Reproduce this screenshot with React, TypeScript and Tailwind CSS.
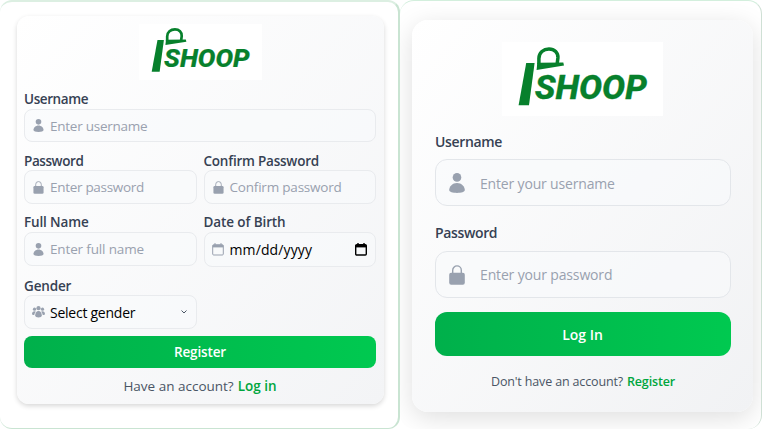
import type { ReactNode } from "react";

function Logo({ className }: { className: string }) {
  return (
    <svg viewBox="0 0 161 74" className={className} preserveAspectRatio="none" fill="#07802c">
      <rect width="161" height="74" fill="#fff" />
      <path d="M24.200 21h8.400L27 63.200H16.600z" />
      <path d="M35.300 20.800l26-.4.7 3-27.400 4.500z" />
      <path d="M36.900 22.500V16.500C36.900 10.500 41.500 7.100 47 7.100s9.300 3.600 8.900 8.900l-.7 5.500" fill="none" stroke="#07802c" strokeWidth="3.500" />
      <text x="32.800" y="56.700" fontSize="33" fontWeight="800" fontStyle="italic" fontFamily="Roboto, sans-serif" textLength="112" lengthAdjust="spacingAndGlyphs" stroke="#07802c" strokeWidth=".3">SHOOP</text>
    </svg>
  );
}

function Person({ className }: { className: string }) {
  return (
    <svg viewBox="0 0 16 20" className={className} fill="currentColor">
      <circle cx="8" cy="4.400" r="4.300" />
      <path d="M8 10C3.500 10 .2 13.500.2 17c0 2 3.500 2.900 7.800 2.900s7.800-.9 7.800-2.900C15.800 13.500 12.500 10 8 10z" />
    </svg>
  );
}

function Lock({ className }: { className: string }) {
  return (
    <svg viewBox="0 0 16 20" className={className} fill="currentColor">
      <rect x=".2" y="7.800" width="15.600" height="12" rx="2" />
      <path d="M3.700 8.500V5.200a4.300 4.300 0 0 1 8.600 0v3.300" fill="none" stroke="currentColor" strokeWidth="1.400" />
    </svg>
  );
}

function Calendar({ className, weight }: { className: string; weight: number }) {
  return (
    <svg viewBox="0 0 12 13" className={className} fill="none" stroke="currentColor" strokeWidth={weight}>
      <rect x=".7" y="1.700" width="10.600" height="10.300" rx="1" />
      <path d="M.7 3.200h10.600" strokeWidth="2.400" />
      <path d="M3 0v2M9 0v2" />
    </svg>
  );
}

function People({ className }: { className: string }) {
  return (
    <svg viewBox="0 0 13 12" className={className} fill="currentColor">
      <circle cx="6.500" cy="2.200" r="2.100" />
      <circle cx="2.500" cy="3.200" r="1.600" />
      <circle cx="10.500" cy="3.200" r="1.600" />
      <path d="M2.500 5.200C1 5.200 0 6.500 0 8c0 .8.900 1.100 2.300 1.100.2-1.500.6-2.500 1.600-3.400-.4-.3-.8-.5-1.400-.5zM10.500 5.200c1.500 0 2.500 1.300 2.500 2.800 0 .8-.9 1.100-2.300 1.100-.2-1.500-.6-2.500-1.600-3.400.4-.3.800-.5 1.400-.5z" />
      <path d="M6.500 5C4.500 5 3.200 7 3.200 9.300c0 1.600 1.500 2.200 3.300 2.200s3.300-.6 3.300-2.200C9.800 7 8.500 5 6.500 5z" />
    </svg>
  );
}

function Field({ label, labelClass, boxClass, icon, children }: { label: string; labelClass: string; boxClass: string; icon: ReactNode; children: ReactNode }) {
  return (
    <div className="min-w-0">
      <div className={`flex h-[18px] items-center text-[13.500px] leading-none font-semibold text-[#364153] ${labelClass}`}>{label}</div>
      <div className={`flex items-center rounded-lg border border-[#e9ebee] bg-[#f9fafb]/60 pl-[7px] text-[14px] ${boxClass}`}>
        <span className="flex w-[13px] shrink-0 justify-center text-[#99a1af]">{icon}</span>
        {children}
      </div>
    </div>
  );
}

export default function App() {
  return (
    <div className="flex h-[430px] w-[763px] overflow-hidden whitespace-nowrap bg-white font-['Open_Sans','Noto_Sans',sans-serif]">
      <section className="h-[429px] w-[400px] shrink-0 rounded-[12px] border-t-2 border-r-2 border-b border-t-[#dcefe2] border-r-[#c9e4d2] border-b-[#c9e4d2] pt-[14px] pl-[17px]">
        <div className="h-[388px] w-[367px] rounded-xl bg-linear-to-br from-white to-[#f3f4f6] pt-2 pr-2 pl-[7px] shadow-[0_2px_5px_rgba(0,0,0,0.16)]">
          <Logo className="mx-auto block h-[56px] w-[123px]" />
          <div className="pt-[10px]">
            <Field label="Username" labelClass="pt-[2px] tracking-[-0.4px]" boxClass="mt-px h-[33px]" icon={<Person className="h-[13px] w-[11px]" />}>
              <span className="mt-px ml-[5px] text-[13.500px] tracking-[-0.25px] text-[#99a1af]">Enter username</span>
            </Field>
          </div>
          <div className="grid grid-cols-2 gap-x-[7px] pt-[10px]">
            <Field label="Password" labelClass="pt-px tracking-[-0.42px]" boxClass="h-[34px]" icon={<Lock className="h-[13px] w-[11px]" />}>
              <span className="mt-px ml-[5px] text-[13.500px] tracking-[-0.3px] text-[#99a1af]">Enter password</span>
            </Field>
            <Field label="Confirm Password" labelClass="pt-px tracking-[-0.22px]" boxClass="h-[34px]" icon={<Lock className="h-[13px] w-[11px]" />}>
              <span className="mt-px ml-[5px] text-[13.500px] tracking-[-0.2px] text-[#99a1af]">Confirm password</span>
            </Field>
          </div>
          <div className="grid grid-cols-2 gap-x-[7px] pt-[10px]">
            <Field label="Full Name" labelClass="tracking-[-0.15px]" boxClass="h-[34px]" icon={<Person className="h-[13px] w-[11px]" />}>
              <span className="ml-[5px] text-[13.500px] tracking-[-0.15px] text-[#99a1af]">Enter full name</span>
            </Field>
            <Field label="Date of Birth" labelClass="tracking-[-0.1px]" boxClass="h-[35px]" icon={<Calendar weight={1} className="h-[13px] w-[12px]" />}>
              <span className="ml-[5px] tracking-[0.12px] text-black">mm/dd/yyyy</span>
              <Calendar weight={1.4} className="mr-[8px] ml-auto h-[13px] w-[12px] text-black" />
            </Field>
          </div>
          <div className="w-[173px] pt-[10px]">
            <Field label="Gender" labelClass="pt-[2px] tracking-[-0.15px]" boxClass="h-[34px]" icon={<People className="h-[12px] w-[13px]" />}>
              <span className="ml-[5px] tracking-[-0.25px] text-black">Select gender</span>
              <svg viewBox="0 0 6 4" className="mr-[9px] ml-auto h-[4px] w-[6px]" fill="none" stroke="#4a5565"><path d="M.5.500 3 3 5.500.5" /></svg>
            </Field>
          </div>
          <div className="mt-[7px] flex h-8 items-center justify-center rounded-lg bg-linear-to-r from-[#00b04b] to-[#00c950] text-[13.500px] font-semibold tracking-[-0.15px] text-white">Register</div>
          <div className="mt-[8px] flex h-5 items-center justify-center gap-1 text-[13.500px] text-[#4a5565]">
            <span>Have an account?</span>
            <span className="font-semibold text-[#00a63e]">Log in</span>
          </div>
        </div>
      </section>
      <section className="h-[429px] w-[362px] shrink-0 overflow-hidden rounded-[14px] border-t border-r border-t-[#d3efdd] border-r-[#cfe0d5] pt-[19px] pl-[12px]">
        <div className="h-[392px] w-[341px] rounded-2xl bg-linear-to-br from-white to-[#f1f2f4] pt-[22px] pr-[22px] pl-[23px] shadow-[0_6px_26px_rgba(0,0,0,0.13)]">
          <Logo className="ml-[67px] block h-[74px] w-[161px]" />
          <div className="mt-[15px] flex h-5 items-center text-[14px] font-semibold tracking-[-0.36px] text-[#364153]">Username</div>
          <div className="mt-[8px] flex h-[47px] items-center rounded-xl border-[1.500px] border-[#e3e6ea] bg-[#f9fafb]/60 pl-[13px] text-[14px] text-[#99a1af]">
            <Person className="h-5 w-4" />
            <span className="mt-px ml-[15px] tracking-[-0.17px]">Enter your username</span>
          </div>
          <div className="mt-[16px] flex h-5 items-center text-[14px] font-semibold tracking-[-0.36px] text-[#364153]">Password</div>
          <div className="mt-[9px] flex h-[47px] items-center rounded-xl border-[1.500px] border-[#e3e6ea] bg-[#f9fafb]/60 pl-[13px] text-[14px] text-[#99a1af]">
            <Lock className="h-5 w-4" />
            <span className="ml-[15px] tracking-[-0.15px]">Enter your password</span>
          </div>
          <div className="mt-[14px] flex h-[44px] items-center justify-center rounded-xl bg-linear-to-r from-[#00b04b] to-[#00c950] pr-px text-[14px] font-semibold text-white">Log In</div>
          <div className="mt-[16px] flex h-5 items-center justify-center gap-1 text-[12.500px] tracking-[-0.15px] text-[#4a5565]">
            <span>Don't have an account?</span>
            <span className="font-semibold text-[#00a63e]">Register</span>
          </div>
        </div>
      </section>
    </div>
  );
}
